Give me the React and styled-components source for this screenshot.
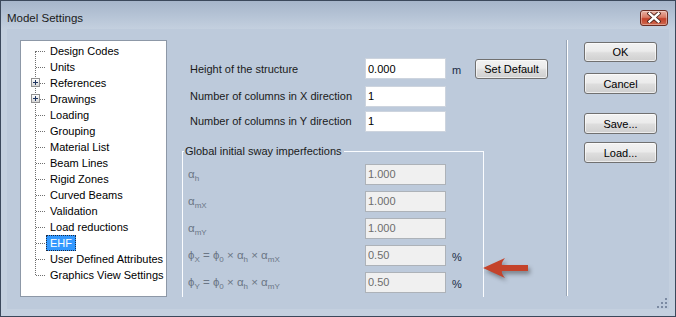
import styled, { createGlobalStyle } from "styled-components"

const GlobalStyle = createGlobalStyle`
  html, body { margin: 0; padding: 0; background: #ffffff; }
  body { font-family: "Liberation Sans", Arial, sans-serif; font-size: 11px; color: #000; }
  * { box-sizing: border-box; }
`

const Window = styled.div`
  position: relative;
  width: 676px;
  height: 317px;
  border: 1px solid #3b485b;
  background: #c4d0df;
  display: flex;
  flex-direction: column;
`
const TitleBar = styled.div`
  height: 28px;
  flex-shrink: 0;
  display: flex;
  align-items: center;
  padding: 5px 7px 0 6px;
  background: linear-gradient(#a6b5ca, #b6c4d6 55%, #c4d0df);
`
const Title = styled.span`
  font-size: 11.5px;
  color: #1b1b1b;
`
const CloseButton = styled.div`
  margin-left: auto;
  width: 28px;
  height: 16px;
  border: 1px solid #6b2c22;
  border-radius: 3px;
  display: flex;
  align-items: center;
  justify-content: center;
  background: linear-gradient(#e8b2a4, #d87a64 45%, #c2412a 55%, #cf6a4f);
  box-shadow: inset 0 0 0 1px rgba(255, 255, 255, 0.35);
`
const Client = styled.div`
  position: relative;
  margin: 0 6px;
  height: 280px;
  background: #bdcadb;
  display: flex;
  padding: 11px 0 0 13px;
`
const TreePanel = styled.div`
  position: relative;
  width: 147px;
  height: 257px;
  flex-shrink: 0;
  background: #fff;
  border: 1px solid #8d98a7;
  padding-top: 2px;
  &::before {
    content: "";
    position: absolute;
    left: 14px;
    top: 10px;
    height: 224px;
    border-left: 1px dotted #6f6f6f;
  }
`
const TreeItem = styled.div`
  position: relative;
  height: 16px;
  display: flex;
  align-items: center;
  padding-left: 25px;
  white-space: nowrap;
  &::before {
    content: "";
    position: absolute;
    left: ${p => (p.$expandable ? "19px" : "15px")};
    width: ${p => (p.$expandable ? "5px" : "9px")};
    top: 8px;
    border-top: 1px dotted #6f6f6f;
  }
`
const ItemLabel = styled.span`
  height: 16px;
  line-height: 14px;
  padding: 0 3px;
  border: 1px dotted ${p => (p.$selected ? "#1a2a44" : "transparent")};
  background: ${p => (p.$selected ? "#3399ff" : "transparent")};
  color: ${p => (p.$selected ? "#fff" : "#000")};
`
const Expander = styled.span`
  position: absolute;
  left: 10px;
  top: 3px;
  width: 9px;
  height: 9px;
  border: 1px solid #919191;
  background: linear-gradient(#ffffff, #d6d6d6);
  z-index: 1;
  &::before, &::after {
    content: "";
    position: absolute;
    background: #1f3560;
  }
  &::before { left: 1px; top: 3px; width: 5px; height: 1px; }
  &::after { left: 3px; top: 1px; width: 1px; height: 5px; }
`
const MainPane = styled.div`
  width: 399px;
  height: 257px;
  flex-shrink: 0;
  overflow: hidden;
  padding: 18px 0 0 15px;
`
const FormRows = styled.div`
  display: flex;
  flex-direction: column;
  padding-left: 8px;
`
const Row = styled.div`
  display: flex;
  align-items: center;
  height: ${p => p.$h || "20px"};
  margin-bottom: ${p => p.$mb || "0"};
`
const Label = styled.span`
  width: ${p => p.$w || "175px"};
  flex-shrink: 0;
  color: ${p => (p.$disabled ? "#6b7685" : "#1a1a1a")};
  font-size: ${p => (p.$disabled ? "11.5px" : "11px")};
  white-space: nowrap;
`
const Sub = styled.sub`
  font-size: 8px;
  vertical-align: -3px;
  line-height: 0;
`
const Field = styled.input`
  width: 81px;
  height: 21px;
  padding: 0 2px;
  margin: 0;
  font: inherit;
  font-size: 11px;
  color: ${p => (p.disabled ? "#6d6d6d" : "#000")};
  -webkit-text-fill-color: ${p => (p.disabled ? "#6d6d6d" : "#000")};
  background: ${p => (p.disabled ? "#f0f0f0" : "#fff")};
  border: 1px solid ${p => (p.disabled ? "#adb2b8" : "#cdd4de")};
  outline: none;
  opacity: 1;
`
const Unit = styled.span`
  width: 29px;
  padding-left: 6px;
  padding-top: ${p => p.$drop || "0"};
  color: #1a2a44;
`
const PushButton = styled.div`
  width: ${p => p.$w || "73px"};
  height: ${p => p.$h || "21px"};
  margin-top: ${p => p.$mt || "0"};
  border: 1px solid #707070;
  border-radius: 3px;
  display: flex;
  align-items: center;
  justify-content: center;
  background: linear-gradient(#f2f2f2, #ebebeb 45%, #dddddd 55%, #cfcfcf);
  box-shadow: inset 0 0 0 1px rgba(255, 255, 255, 0.6);
  color: #000;
`
const GroupBox = styled.fieldset`
  margin: 14px 0 0 0;
  width: 302px;
  height: 200px;
  border: 1px solid #fafcff;
  padding: 6px 0 0 5px;
  display: flex;
  flex-direction: column;
  gap: 7px;
`
const GroupTitle = styled.legend`
  padding: 0 2px 0 1px;
  margin-left: -4px;
  line-height: 13px;
  color: #1a1a1a;
`
const Separator = styled.div`
  width: 2px;
  height: 256px;
  flex-shrink: 0;
  border-left: 1px solid #98a5b6;
  border-right: 1px solid #ffffff;
`
const ButtonColumn = styled.div`
  display: flex;
  flex-direction: column;
  margin-left: 16px;
  padding-top: 2px;
`
const Arrow = styled.svg`
  position: absolute;
  left: 480px;
  top: 254px;
  filter: drop-shadow(2px 3px 2px rgba(40, 40, 40, 0.45));
`
const Grip = styled.svg`
  position: absolute;
  left: 649px;
  top: 268px;
`

const treeItems = [
  "Design Codes", "Units", "References", "Drawings", "Loading", "Grouping",
  "Material List", "Beam Lines", "Rigid Zones", "Curved Beams", "Validation",
  "Load reductions", "EHF", "User Defined Attributes", "Graphics View Settings",
]
const expandable = ["References", "Drawings"]

export default function App() {
  return (
    <>
      <GlobalStyle />
      <Window>
        <TitleBar>
          <Title>Model Settings</Title>
          <CloseButton>
            <svg width="14" height="11" viewBox="0 0 14 11">
              <path d="M2.5 1.5 L11.5 9.5 M11.5 1.5 L2.5 9.5" stroke="#4a2018" strokeWidth="4.2" strokeLinecap="square" />
              <path d="M2.5 1.5 L11.5 9.5 M11.5 1.5 L2.5 9.5" stroke="#ffffff" strokeWidth="2.4" strokeLinecap="square" />
            </svg>
          </CloseButton>
        </TitleBar>
        <Client>
          <TreePanel>
            {treeItems.map(name => (
              <TreeItem key={name} $expandable={expandable.includes(name)}>
                {expandable.includes(name) && <Expander />}
                <ItemLabel $selected={name === "EHF"}>{name}</ItemLabel>
              </TreeItem>
            ))}
          </TreePanel>
          <MainPane>
            <FormRows>
              <Row $h="21px" $mb="7px">
                <Label>Height of the structure</Label>
                <Field defaultValue="0.000" />
                <Unit $drop="3px">m</Unit>
                <PushButton $w="73px" $h="20px">Set Default</PushButton>
              </Row>
              <Row $h="20px" $mb="5px">
                <Label>Number of columns in X direction</Label>
                <Field defaultValue="1" />
              </Row>
              <Row $h="20px">
                <Label>Number of columns in Y direction</Label>
                <Field defaultValue="1" />
              </Row>
            </FormRows>
            <GroupBox>
              <GroupTitle>Global initial sway imperfections</GroupTitle>
              <Row>
                <Label $w="177px" $disabled>α<Sub>h</Sub></Label>
                <Field disabled defaultValue="1.000" />
              </Row>
              <Row>
                <Label $w="177px" $disabled>α<Sub>mX</Sub></Label>
                <Field disabled defaultValue="1.000" />
              </Row>
              <Row>
                <Label $w="177px" $disabled>α<Sub>mY</Sub></Label>
                <Field disabled defaultValue="1.000" />
              </Row>
              <Row>
                <Label $w="177px" $disabled>ϕ<Sub>X</Sub> = ϕ<Sub>0</Sub> × α<Sub>h</Sub> × α<Sub>mX</Sub></Label>
                <Field disabled defaultValue="0.50" />
                <Unit $drop="3px">%</Unit>
              </Row>
              <Row>
                <Label $w="177px" $disabled>ϕ<Sub>Y</Sub> = ϕ<Sub>0</Sub> × α<Sub>h</Sub> × α<Sub>mY</Sub></Label>
                <Field disabled defaultValue="0.50" />
                <Unit $drop="3px">%</Unit>
              </Row>
            </GroupBox>
          </MainPane>
          <Separator />
          <ButtonColumn>
            <PushButton $h="20px">OK</PushButton>
            <PushButton $mt="11px">Cancel</PushButton>
            <PushButton $mt="19px">Save...</PushButton>
            <PushButton $mt="8px">Load...</PushButton>
          </ButtonColumn>
          <Grip width="12" height="12" viewBox="0 0 12 12">
            {[[9, 1], [5, 5], [9, 5], [1, 9], [5, 9], [9, 9]].map(([x, y]) => (
              <rect key={`${x}-${y}`} x={x} y={y} width="2" height="2" fill="#7b8aa2" />
            ))}
          </Grip>
        </Client>
        <Arrow width="54" height="28" viewBox="0 0 54 28">
          <path d="M2 13 L24 3 Q20 8 21 10 L47 10 L47 16 L21 16 Q20 18 24 23 Z" fill="#c4432b" />
        </Arrow>
      </Window>
    </>
  )
}
